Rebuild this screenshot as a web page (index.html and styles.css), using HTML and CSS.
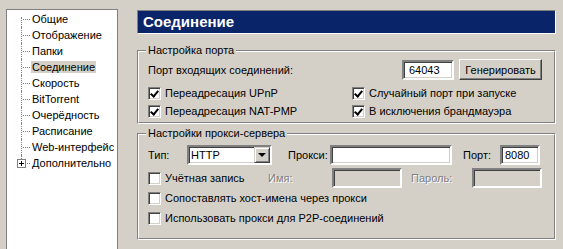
FILE: index.html
```html
<!DOCTYPE html>
<html lang="ru">
  <head>
    <meta charset="UTF-8" />
    <title>Настройки</title>
    <link rel="stylesheet" href="styles.css">
  </head>
  <body>
    <div class="tree-panel">
      <ul class="tree">
        <li><span>Общие</span></li>
        <li><span>Отображение</span></li>
        <li><span>Папки</span></li>
        <li class="selected"><span>Соединение</span></li>
        <li><span>Скорость</span></li>
        <li><span>BitTorrent</span></li>
        <li><span>Очерёдность</span></li>
        <li><span>Расписание</span></li>
        <li><span>Web-интерфейс</span></li>
        <li class="closed"><i class="expander"></i><span>Дополнительно</span></li>
      </ul>
    </div>

    <div class="content">
      <div class="page-title">Соединение</div>

      <div class="group port-group">
        <div class="group-inner">
          <span class="legend">Настройка порта</span>
          <div class="port-row">
            <span class="grow">Порт входящих соединений:</span>
            <input class="field port-field" type="text" value="64043">
            <button class="btn">Генерировать</button>
          </div>
          <div class="check-grid">
            <label class="check"><i class="box on"></i>Переадресация UPnP</label>
            <label class="check"><i class="box on"></i>Случайный порт при запуске</label>
            <label class="check"><i class="box on"></i>Переадресация NAT-PMP</label>
            <label class="check"><i class="box on"></i>В исключения брандмауэра</label>
          </div>
        </div>
      </div>

      <div class="group proxy-group">
        <div class="group-inner">
          <span class="legend">Настройки прокси-сервера</span>
          <div class="proxy-row">
            <span class="lbl-type">Тип:</span>
            <div class="combo">
              <span class="combo-value">HTTP</span>
              <span class="combo-btn"><i class="arrow"></i></span>
            </div>
            <span class="lbl-proxy">Прокси:</span>
            <input class="field proxy-field" type="text" value="">
            <span class="lbl-port">Порт:</span>
            <input class="field small-field" type="text" value="8080">
          </div>
          <div class="auth-row">
            <label class="check auth-check"><i class="box"></i>Учётная запись</label>
            <span class="disabled lbl-name">Имя:</span>
            <input class="field off-field" type="text" disabled>
            <span class="disabled lbl-pass">Пароль:</span>
            <input class="field off-field" type="text" disabled>
          </div>
          <label class="check line"><i class="box"></i>Сопоставлять хост-имена через прокси</label>
          <label class="check line"><i class="box"></i>Использовать прокси для P2P-соединений</label>
        </div>
      </div>
    </div>
  </body>
</html>
```

FILE: styles.css
```css
body {
  margin: 0;
  padding: 9px 0 0 6px;
  background-color: #d4d0c8;
  font-family: "Liberation Sans", Arial, sans-serif;
  font-size: 11px;
  color: #000;
  display: flex;
  align-items: flex-start;
  overflow: hidden;
  height: 249px;
  box-sizing: border-box;
}

/* left tree */
.tree-panel {
  width: 110px;
  height: 240px;
  background: #fff;
  border: 1px solid #808080;
  border-bottom: none;
  flex-shrink: 0;
}
.tree {
  list-style: none;
  margin: 0;
  padding: 1px 0 0 0;
}
.tree li {
  position: relative;
  height: 16px;
  line-height: 16px;
  padding-left: 24px;
  white-space: nowrap;
}
.tree li span {
  padding: 0 1px;
}
.tree li::before {
  content: "";
  position: absolute;
  left: 14px;
  top: 0;
  bottom: 0;
  border-left: 1px dotted #808080;
}
.tree li:first-child::before {
  top: 6px;
}
.tree li::after {
  content: "";
  position: absolute;
  left: 16px;
  top: 8px;
  width: 7px;
  border-top: 1px dotted #808080;
}
.tree li.closed::before {
  bottom: 12px;
}
.tree li.closed::after {
  left: 20px;
  width: 3px;
}
.tree .selected span {
  background: #d4d0c8;
}
.expander {
  position: absolute;
  left: 10px;
  top: 4px;
  width: 7px;
  height: 7px;
  border: 1px solid #808080;
  background: #fff;
  z-index: 1;
}
.expander::before,
.expander::after {
  content: "";
  position: absolute;
  background: #000;
}
.expander::before {
  left: 1px;
  top: 3px;
  width: 5px;
  height: 1px;
}
.expander::after {
  left: 3px;
  top: 1px;
  width: 1px;
  height: 5px;
}

/* right side */
.content {
  margin-left: 19px;
  width: 419px;
  padding-top: 1px;
}
.page-title {
  height: 22px;
  line-height: 22px;
  background: #0a246a;
  color: #fff;
  font-weight: bold;
  font-size: 15px;
  padding-left: 5px;
  border-top: 1px solid #808080;
  border-left: 1px solid #808080;
  border-bottom: 1px solid #fff;
  border-right: 1px solid #fff;
}

.group {
  position: relative;
  border-top: 1px solid #808080;
  border-left: 1px solid #808080;
  border-bottom: 1px solid #fff;
  border-right: 1px solid #fff;
}
.group-inner {
  height: 100%;
  box-sizing: border-box;
  border-top: 1px solid #fff;
  border-left: 1px solid #fff;
  border-bottom: 1px solid #808080;
  border-right: 1px solid #808080;
  padding: 0 12px 0 9px;
}
.legend {
  position: absolute;
  top: -7px;
  left: 8px;
  padding: 0 2px;
  background: #d4d0c8;
  line-height: 13px;
}
.port-group {
  margin-top: 16px;
  height: 72px;
}
.proxy-group {
  margin-top: 9px;
  height: 105px;
}

.port-row {
  display: flex;
  align-items: center;
  padding-top: 7px;
  height: 21px;
}
.grow {
  flex: 1;
}

.field {
  box-sizing: border-box;
  height: 20px;
  margin: 0;
  padding: 0 3px;
  font: inherit;
  color: #000;
  background: #fff;
  border-style: solid;
  border-width: 2px;
  border-color: #808080 #fff #fff #808080;
  box-shadow: inset 1px 1px 0 #404040, inset -1px -1px 0 #d4d0c8;
  outline: none;
}
.port-field {
  width: 52px;
  margin-right: 5px;
  padding-left: 5px;
}
.btn {
  box-sizing: border-box;
  width: 83px;
  height: 21px;
  margin: 0;
  padding: 0;
  font: inherit;
  color: #000;
  background: #d4d0c8;
  border-style: solid;
  border-width: 1px;
  border-color: #fff #404040 #404040 #fff;
  box-shadow: inset -1px -1px 0 #808080;
}

.check-grid {
  display: grid;
  grid-template-columns: 204px auto;
  grid-auto-rows: 18px;
  margin-top: 4px;
}
.check {
  display: flex;
  align-items: center;
  white-space: nowrap;
}
.box {
  position: relative;
  box-sizing: border-box;
  width: 13px;
  height: 13px;
  margin-right: 4px;
  flex-shrink: 0;
  background: #fff;
  border-style: solid;
  border-width: 1px;
  border-color: #808080 #fff #fff #808080;
  box-shadow: inset 1px 1px 0 #404040, inset -1px -1px 0 #d4d0c8;
}
.box.on::after {
  content: "";
  position: absolute;
  left: 2px;
  top: 1px;
  width: 3px;
  height: 6px;
  border-right: 2px solid #000;
  border-bottom: 2px solid #000;
  transform: translate(1px, 0) rotate(40deg);
}

.proxy-row {
  display: flex;
  align-items: center;
  padding-top: 10px;
  height: 20px;
}
.lbl-type {
  width: 39px;
}
.combo {
  box-sizing: border-box;
  display: flex;
  width: 85px;
  height: 20px;
  background: #fff;
  border-style: solid;
  border-width: 2px;
  border-color: #808080 #fff #fff #808080;
  box-shadow: inset 1px 1px 0 #404040, inset -1px -1px 0 #d4d0c8;
}
.combo-value {
  flex: 1;
  line-height: 16px;
  padding-left: 2px;
}
.combo-btn {
  box-sizing: border-box;
  width: 16px;
  height: 16px;
  display: flex;
  align-items: center;
  justify-content: center;
  background: #d4d0c8;
  border-style: solid;
  border-width: 1px;
  border-color: #d4d0c8 #404040 #404040 #d4d0c8;
  box-shadow: inset 1px 1px 0 #fff, inset -1px -1px 0 #808080;
}
.arrow {
  width: 0;
  height: 0;
  border-left: 4px solid transparent;
  border-right: 4px solid transparent;
  border-top: 4px solid #000;
}
.lbl-proxy {
  margin-left: 16px;
  width: 42px;
}
.proxy-field {
  width: 122px;
}
.lbl-port {
  margin-left: 11px;
  width: 37px;
}
.small-field {
  width: 40px;
}

.auth-row {
  display: flex;
  align-items: center;
  margin-top: 3px;
  height: 20px;
}
.auth-check {
  width: 120px;
}
.disabled {
  color: #808080;
  text-shadow: 1px 1px 0 #fff;
}
.lbl-name {
  width: 64px;
}
.off-field {
  width: 70px;
  background: #d4d0c8;
}
.lbl-pass {
  margin-left: 9px;
  width: 61px;
}
.line {
  height: 20px;
}
```
